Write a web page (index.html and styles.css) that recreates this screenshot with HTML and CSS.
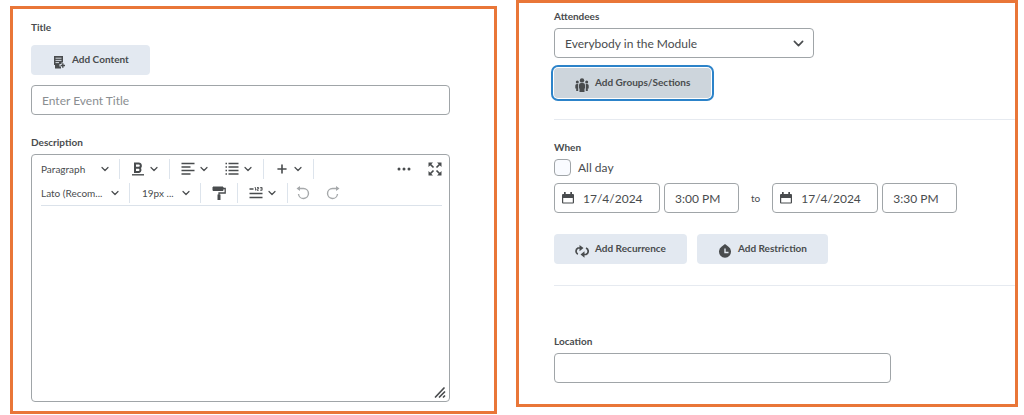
FILE: index.html
```html
<!DOCTYPE html>
<html lang="en">
<head>
<meta charset="UTF-8">
<meta name="viewport" content="width=device-width, initial-scale=1.0">
<title>Create Event</title>
<link rel="stylesheet" href="styles.css">
</head>
<body>
<!-- shared icons -->
<svg class="sprite" aria-hidden="true">
    <symbol id="chevron" viewBox="0 0 8 8">
        <path d="M1 2.500l3 3 3-3" fill="none" stroke="currentColor" stroke-width="1.200" stroke-linecap="round" stroke-linejoin="round"/>
    </symbol>
    <symbol id="calendar" viewBox="0 0 12 12">
        <path d="M2 0h1.700v2h4.600V0H10v2h1a1 1 0 0 1 1 1v7.500a1 1 0 0 1-1 1H1a1 1 0 0 1-1-1V3a1 1 0 0 1 1-1h1zM1.200 6v4.400h9.600V6z" fill="currentColor" fill-rule="evenodd"/>
    </symbol>
</svg>

<form class="page">
    <section class="panel panel-left">
        <label class="label label-title" for="title">Title</label>
        <button type="button" class="btn">
            <svg class="icon" viewBox="0 0 14 14">
                <path d="M2 1h9v6.500H9.500V9H7.500v2.500H9V13.500H3V10H2z" fill="currentColor"/>
                <path d="M3.500 3.200h6M3.500 5.400h6M3.500 7.600h3.500" stroke="#e3e9f1" stroke-width="0.900"/>
                <path d="M10.800 8.300v4.400M8.600 10.500h4.400" stroke="currentColor" stroke-width="1.400"/>
            </svg>
            <span>Add Content</span>
        </button>
        <input class="field title-field" id="title" type="text" placeholder="Enter Event Title">

        <label class="label" for="description">Description</label>
        <div class="editor">
            <div class="toolbar">
                <div class="toolbar-row">
                    <div class="dropdown dropdown-format">
                        <select aria-label="Format"><option>Paragraph</option></select>
                        <svg class="chevron"><use href="#chevron"/></svg>
                    </div>
                    <span class="sep"></span>
                    <button type="button" class="tool" aria-label="Bold">
                        <svg class="icon" viewBox="0 0 14 14">
                            <path d="M4 1.500h3.700a2.200 2.200 0 0 1 .6 4.300a2.300 2.300 0 0 1-.4 4.200H4zM4 5.800h3.800" fill="none" stroke="currentColor" stroke-width="2"/>
                            <path d="M1 12.800h12" stroke="currentColor" stroke-width="1.400"/>
                        </svg>
                        <svg class="chevron"><use href="#chevron"/></svg>
                    </button>
                    <span class="sep"></span>
                    <button type="button" class="tool" aria-label="Align">
                        <svg class="icon" viewBox="0 0 14 14">
                            <path d="M.5 1.500h13M.5 5h9M.5 8.500h13M.5 12h9" stroke="currentColor" stroke-width="1.400"/>
                        </svg>
                        <svg class="chevron"><use href="#chevron"/></svg>
                    </button>
                    <button type="button" class="tool tool-list" aria-label="List">
                        <svg class="icon" viewBox="0 0 14 14">
                            <path d="M3.500 1.500H13.500M3.500 5H13.500M3.500 8.500H13.500M3.500 12H13.500M.5 1.500H2M.5 5H2M.5 8.500H2M.5 12H2" stroke="currentColor" stroke-width="1.500"/>
                        </svg>
                        <svg class="chevron"><use href="#chevron"/></svg>
                    </button>
                    <span class="sep"></span>
                    <button type="button" class="tool" aria-label="Insert">
                        <svg class="icon" viewBox="0 0 14 14">
                            <path d="M7 3v8M3 7h8" stroke="currentColor" stroke-width="1.600" stroke-linecap="round"/>
                        </svg>
                        <svg class="chevron"><use href="#chevron"/></svg>
                    </button>
                    <span class="sep"></span>
                    <div class="toolbar-end">
                        <button type="button" class="tool-single" aria-label="More">
                            <svg class="icon" viewBox="0 0 14 14" fill="currentColor">
                                <circle cx="2" cy="7" r="1.500"/><circle cx="7" cy="7" r="1.500"/><circle cx="12" cy="7" r="1.500"/>
                            </svg>
                        </button>
                        <button type="button" class="tool-single" aria-label="Fullscreen">
                            <svg class="icon" viewBox="0 0 14 14" fill="currentColor">
                                <path d="M.5.5H5L.5 5zM13.500.5V5L9 .5zM.5 13.500V9L5 13.500zM13.500 13.500H9L13.500 9z"/>
                                <path d="M2 2l3.500 3.500M12 2L8.500 5.500M2 12l3.500-3.500M12 12L8.500 8.500" stroke="currentColor" stroke-width="1.700"/>
                            </svg>
                        </button>
                    </div>
                </div>
                <div class="toolbar-row">
                    <div class="dropdown dropdown-font">
                        <select aria-label="Font"><option>Lato (Recom...</option></select>
                        <svg class="chevron"><use href="#chevron"/></svg>
                    </div>
                    <span class="sep"></span>
                    <div class="dropdown dropdown-size">
                        <select aria-label="Font size"><option>19px ...</option></select>
                        <svg class="chevron"><use href="#chevron"/></svg>
                    </div>
                    <span class="sep"></span>
                    <button type="button" class="tool-single tool-painter" aria-label="Format painter">
                        <svg class="icon" viewBox="0 0 14 14">
                            <path d="M1 1h10v3.500H1z" fill="currentColor" stroke="currentColor" stroke-linejoin="round"/>
                            <path d="M11 2.500h2.200V7H7v2" fill="none" stroke="currentColor" stroke-width="1.300"/>
                            <path d="M5.500 8.500h3V14h-3z" fill="currentColor"/>
                        </svg>
                    </button>
                    <span class="sep"></span>
                    <button type="button" class="tool" aria-label="Word count">
                        <svg class="icon" viewBox="0 0 14 14">
                            <path d="M.5 3h4M.5 7.500h13M.5 11.500h13" stroke="currentColor" stroke-width="1.500"/>
                            <path d="M5.700 1.500h.8v3M8 1.500h1.600v1.400H8V4.300h1.700M11.200 1.500h1.900v2.800h-1.900M11.500 2.900h1.500" fill="none" stroke="currentColor" stroke-width="0.900"/>
                        </svg>
                        <svg class="chevron"><use href="#chevron"/></svg>
                    </button>
                    <span class="sep"></span>
                    <button type="button" class="tool-single tool-muted" aria-label="Undo">
                        <svg class="icon" viewBox="0 0 14 14">
                            <path d="M2 2.500h5.500a5 5 0 1 1-5 5.500" fill="none" stroke="currentColor" stroke-width="1.400"/>
                            <path d="M.5 2.500L4 0v5z" fill="currentColor"/>
                        </svg>
                    </button>
                    <button type="button" class="tool-single tool-muted" aria-label="Redo">
                        <svg class="icon" viewBox="0 0 14 14">
                            <path d="M12 2.500H6.500a5 5 0 1 0 5 5.500" fill="none" stroke="currentColor" stroke-width="1.400"/>
                            <path d="M13.500 2.500L10 0v5z" fill="currentColor"/>
                        </svg>
                    </button>
                </div>
            </div>
            <textarea id="description" class="editor-text"></textarea>
            <svg class="grip" viewBox="0 0 12 12">
                <path d="M1.500 11L10 2M5.500 11L10.500 6M9.500 11l1-1" fill="none" stroke="currentColor" stroke-width="1.700" stroke-linecap="round"/>
            </svg>
        </div>
    </section>

    <section class="panel panel-right">
        <label class="label" for="attendees">Attendees</label>
        <div class="select">
            <select class="field" id="attendees"><option>Everybody in the Module</option></select>
            <svg class="chevron chevron-large"><use href="#chevron"/></svg>
        </div>
        <button type="button" class="btn btn-focused">
            <svg class="icon" viewBox="0 0 14 14" fill="currentColor">
                <circle cx="7" cy="2.400" r="2.200"/>
                <circle cx="2.300" cy="4" r="1.500"/>
                <circle cx="11.700" cy="4" r="1.500"/>
                <path d="M4 7a2 2 0 0 1 2-2h2a2 2 0 0 1 2 2v3.500H9.500V14h-5v-3.500H4z"/>
                <path d="M.3 7.500a1.500 1.500 0 0 1 1.500-1.500h1.400V13H1.200v-2.500H.3zM13.700 7.500A1.500 1.500 0 0 0 12.200 6h-1.400V13h2v-2.500h.9z"/>
            </svg>
            <span>Add Groups/Sections</span>
        </button>
        <hr class="divider">

        <fieldset class="when">
            <legend class="label">When</legend>
            <label class="check"><input type="checkbox">All day</label>
            <div class="dates">
                <div class="date">
                    <svg class="calendar"><use href="#calendar"/></svg>
                    <input class="field" type="text" value="17/4/2024" aria-label="Start date">
                </div>
                <input class="field time" type="text" value="3:00 PM" aria-label="Start time">
                <span class="to">to</span>
                <div class="date">
                    <svg class="calendar"><use href="#calendar"/></svg>
                    <input class="field" type="text" value="17/4/2024" aria-label="End date">
                </div>
                <input class="field time" type="text" value="3:30 PM" aria-label="End time">
            </div>
        </fieldset>
        <div class="actions">
            <button type="button" class="btn">
                <svg class="icon" viewBox="0 0 14 14">
                    <path d="M2.800 10.200A3.500 3.500 0 0 1 3 4h2.500M11 4a3.500 3.500 0 0 1 0 6.500H9" fill="none" stroke="currentColor" stroke-width="1.700"/>
                    <path d="M4.500 1L8.500 4l-4 3.200zM9.500 7.300L5.500 10.500l4 3.200z" fill="currentColor"/>
                </svg>
                <span>Add Recurrence</span>
            </button>
            <button type="button" class="btn">
                <svg class="icon" viewBox="0 0 14 14">
                    <path d="M7 0l3.500 2.800A6 6 0 1 1 3.500 2.800z" fill="currentColor"/>
                    <path d="M7 4.500v4h3.500" fill="none" stroke="#e3e9f1" stroke-width="1.400"/>
                </svg>
                <span>Add Restriction</span>
            </button>
        </div>
        <hr class="divider">

        <label class="label label-location" for="location">Location</label>
        <input class="field location-field" id="location" type="text">
    </section>
</form>
</body>
</html>
```
FILE: styles.css
```css
* {
  box-sizing: border-box;
}

body {
  margin: 0;
  background-color: #fff;
  color: #494c4e;
  font-family: Lato, "Liberation Sans", sans-serif;
  font-size: 12px;
}

button,
input,
select,
textarea {
  color: inherit;
  font: inherit;
  margin: 0;
}

.sprite {
  display: none;
}

.page {
  display: grid;
  grid-template-columns: 487fr 502fr;
  gap: 19px;
  align-items: start;
  padding: 0 6px 0 10px;
}

.panel {
  display: flex;
  flex-direction: column;
  align-items: flex-start;
  border: 3px solid #e97638;
}

.panel-left {
  margin-top: 6px;
  padding: 10px 44px 9px 18px;
}

.panel-right {
  padding: 5px 0 21px 35px;
}

.label {
  padding: 0;
  margin-bottom: 4px;
  font-size: 10px;
  font-weight: bold;
  line-height: 16px;
}

.label-title {
  margin-bottom: 10px;
}

.btn {
  display: flex;
  align-items: center;
  gap: 6px;
  height: 30px;
  padding: 0 21px;
  border: 0;
  border-radius: 4px;
  background-color: #e3e9f1;
  font-size: 10px;
  font-weight: bold;
  white-space: nowrap;
  cursor: pointer;
}

.btn span {
  padding-bottom: 2px;
}

.btn .icon {
  margin-top: 3px;
}

.btn-focused {
  background-color: #cdd5dc;
  box-shadow: 0 0 0 1px #fff, 0 0 0 3px #2c83c9;
}

.icon {
  flex: none;
  width: 14px;
  height: 14px;
}

.chevron {
  flex: none;
  width: 8px;
  height: 8px;
}

.field {
  width: 100%;
  height: 30px;
  padding: 0 10px;
  border: 1px solid #a0a5a8;
  border-radius: 4px;
  background-color: #fff;
}

.field::placeholder {
  color: #8a8e91;
  opacity: 1;
}

.title-field {
  margin: 10px 0 19px;
}

/* description editor */
.editor {
  position: relative;
  display: flex;
  flex-direction: column;
  width: 100%;
  min-height: 248px;
  border: 1px solid #a0a5a8;
  border-radius: 4px;
}

.toolbar {
  margin: 2px 7px 0 9px;
  border-bottom: 1px solid #dbe2ea;
}

.toolbar-row {
  display: flex;
  align-items: center;
  height: 24px;
}

.sep {
  width: 1px;
  height: 20px;
  background-color: #dde4ec;
}

.dropdown {
  display: flex;
  align-items: center;
  justify-content: space-between;
  padding-right: 10px;
}

.dropdown select {
  appearance: none;
  flex: 1;
  min-width: 0;
  padding: 0;
  border: 0;
  background: none;
  font-size: 10px;
}

.dropdown-format {
  width: 78px;
}

.dropdown-font {
  width: 88px;
}

.dropdown-size {
  width: 70px;
  padding-left: 12px;
}

.tool,
.tool-single {
  display: flex;
  align-items: center;
  gap: 5px;
  padding: 0 11px;
  border: 0;
  background: none;
}

.tool-single {
  padding: 0 8px;
}

.tool-list {
  padding-left: 6px;
}

.tool-painter {
  padding: 0 11px;
}

.tool-muted {
  color: #a6a9ab;
}

.toolbar-end {
  display: flex;
  gap: 1px;
  margin-left: auto;
}

.toolbar-end .tool-single:last-child {
  padding-right: 0;
}

.editor-text {
  flex: 1;
  margin: 0 8px;
  border: 0;
  resize: none;
  outline: 0;
}

.grip {
  position: absolute;
  right: 3px;
  bottom: 3px;
  width: 12px;
  height: 12px;
}

/* attendees */
.select {
  position: relative;
  width: 260px;
  margin-bottom: 10px;
}

.select .field {
  appearance: none;
}

.chevron-large {
  position: absolute;
  top: 10px;
  right: 10px;
  width: 11px;
  height: 11px;
  pointer-events: none;
}

.divider {
  width: 100%;
  margin: 21px 0 19px;
  border: 0;
  border-top: 1px solid #e6eaf0;
}

/* dates */
.when {
  margin: 0;
  padding: 0;
  border: 0;
}

.check {
  display: flex;
  align-items: center;
  gap: 7px;
}

.check input {
  appearance: none;
  width: 17px;
  height: 17px;
  border: 1px solid #a0a5a8;
  border-radius: 4px;
  background-color: #f9fbff;
}

.dates {
  display: flex;
  align-items: center;
  gap: 4px;
  margin: 7px 0 21px;
}

.date {
  position: relative;
  width: 106px;
}

.date .field {
  padding-left: 28px;
}

.calendar {
  position: absolute;
  top: 9px;
  left: 8px;
  width: 12px;
  height: 12px;
}

.time {
  width: 75px;
}

.to {
  margin: 0 8px;
  font-size: 10px;
}

.actions {
  display: flex;
  gap: 10px;
}

.label-location {
  margin-top: 28px;
}

.location-field {
  width: 337px;
}
```
